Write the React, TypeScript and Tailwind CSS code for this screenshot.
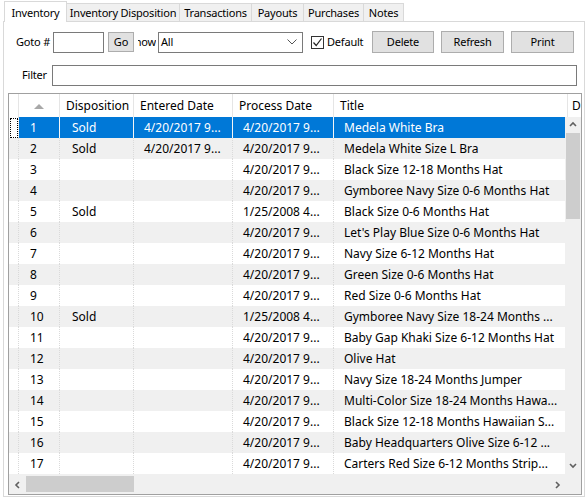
import React from "react";

type Row = {
  n: number;
  disp: string;
  entered: string;
  processed: string;
  title: string;
};

const rows: Row[] = [
  { n: 1, disp: "Sold", entered: "4/20/2017 9...", processed: "4/20/2017 9...", title: "Medela White Bra" },
  { n: 2, disp: "Sold", entered: "4/20/2017 9...", processed: "4/20/2017 9...", title: "Medela White Size L Bra" },
  { n: 3, disp: "", entered: "", processed: "4/20/2017 9...", title: "Black Size 12-18 Months Hat" },
  { n: 4, disp: "", entered: "", processed: "4/20/2017 9...", title: "Gymboree Navy Size 0-6 Months Hat" },
  { n: 5, disp: "Sold", entered: "", processed: "1/25/2008 4...", title: "Black Size 0-6 Months Hat" },
  { n: 6, disp: "", entered: "", processed: "4/20/2017 9...", title: "Let's Play Blue Size 0-6 Months Hat" },
  { n: 7, disp: "", entered: "", processed: "4/20/2017 9...", title: "Navy Size 6-12 Months Hat" },
  { n: 8, disp: "", entered: "", processed: "4/20/2017 9...", title: "Green Size 0-6 Months Hat" },
  { n: 9, disp: "", entered: "", processed: "4/20/2017 9...", title: "Red Size 0-6 Months Hat" },
  { n: 10, disp: "Sold", entered: "", processed: "1/25/2008 4...", title: "Gymboree Navy Size 18-24 Months ..." },
  { n: 11, disp: "", entered: "", processed: "4/20/2017 9...", title: "Baby Gap Khaki Size 6-12 Months Hat" },
  { n: 12, disp: "", entered: "", processed: "4/20/2017 9...", title: "Olive Hat" },
  { n: 13, disp: "", entered: "", processed: "4/20/2017 9...", title: "Navy Size 18-24 Months Jumper" },
  { n: 14, disp: "", entered: "", processed: "4/20/2017 9...", title: "Multi-Color Size 18-24 Months Hawa..." },
  { n: 15, disp: "", entered: "", processed: "4/20/2017 9...", title: "Black Size 12-18 Months Hawaiian S..." },
  { n: 16, disp: "", entered: "", processed: "4/20/2017 9...", title: "Baby Headquarters Olive Size 6-12 ..." },
  { n: 17, disp: "", entered: "", processed: "4/20/2017 9...", title: "Carters Red Size 6-12 Months Strip..." },
];

const tabs = [
  { label: "Inventory Disposition", w: "w-[113px]" },
  { label: "Transactions", w: "w-[72px]" },
  { label: "Payouts", w: "w-[52px]" },
  { label: "Purchases", w: "w-[60px]" },
  { label: "Notes", w: "w-[40px]" },
];

function Chevron({ dir }: { dir: "up" | "down" | "left" | "right" }) {
  const pts = {
    up: "1,5 4,2 7,5",
    down: "1,2 4,5 7,2",
    left: "5,1 2,4 5,7",
    right: "3,1 6,4 3,7",
  }[dir];
  return (
    <svg width="8" height="8" viewBox="0 0 8 8">
      <polyline points={pts} fill="none" stroke="#606060" strokeWidth="1.6" />
    </svg>
  );
}

function Btn({ label, w }: { label: string; w: string }) {
  return (
    <div
      className={`${w} h-[22px] flex items-center justify-center bg-[#e1e1e1] border border-[#adadad] text-black`}
    >
      {label}
    </div>
  );
}

export default function App() {
  return (
    <div
      className="w-[588px] h-[498px] bg-white overflow-hidden text-[12px] text-black whitespace-nowrap"
      style={{ fontFamily: '"Noto Sans", "Open Sans", sans-serif' }}
    >
      {/* tab strip */}
      <div className="flex items-end h-[21px] pl-[4px] relative z-10 text-[11px] tracking-[-0.2px]">
        <div className="w-[63px] h-[21px] -mb-px bg-white border border-b-0 border-[#d9d9d9] flex items-start justify-center pt-[3px]">
          Inventory
        </div>
        {tabs.map((t) => (
          <div
            key={t.label}
            className={`${t.w} h-[18px] shrink-0 bg-[#f0f0f0] border border-l-0 border-b-0 border-[#d9d9d9] flex items-center justify-center pt-px`}
          >
            {t.label}
          </div>
        ))}
      </div>

      {/* tab page */}
      <div className="ml-[3px] w-[582px] h-[476px] border border-[#d9d9d9] bg-white flex flex-col">
        {/* toolbar */}
        <div className="flex items-center h-[22px] mt-[9px] text-[11px] tracking-[-0.2px]">
          <div className="ml-[12px] w-[37px] shrink-0">Goto #</div>
          <div className="w-[51px] h-[21px] shrink-0 border border-[#7a7a7a] bg-white" />
          <div className="ml-[4px] w-[26px] h-[20px] shrink-0 flex items-center justify-center bg-[#e1e1e1] border border-[#adadad]">
            Go
          </div>
          <div className="ml-[4px] w-[18px] shrink-0 overflow-hidden flex justify-end">
            <span className="shrink-0">Show</span>
          </div>
          <div className="ml-[2px] w-[145px] h-[21px] shrink-0 border border-[#7a7a7a] bg-white flex items-center justify-between pl-[2px] pr-[5px]">
            <span>All</span>
            <svg width="10" height="6" viewBox="0 0 10 6">
              <polyline points="0.5,0.5 5,5 9.5,0.5" fill="none" stroke="#555" strokeWidth="1" />
            </svg>
          </div>
          <div className="ml-[8px] w-[13px] h-[13px] shrink-0 border border-[#333] bg-white flex items-center justify-center">
            <svg width="11" height="11" viewBox="0 0 11 11">
              <polyline points="1.5,5.5 4.2,8.5 9.5,1.5" fill="none" stroke="#222" strokeWidth="1.2" />
            </svg>
          </div>
          <span className="ml-[3px] w-[45px] shrink-0">Default</span>
          <div>
            <Btn label="Delete" w="w-[62px]" />
          </div>
          <div className="ml-[7px]">
            <Btn label="Refresh" w="w-[63px]" />
          </div>
          <div className="ml-[7px]">
            <Btn label="Print" w="w-[63px]" />
          </div>
        </div>

        {/* filter */}
        <div className="flex items-center h-[21px] mt-[12px] text-[11px] tracking-[-0.2px]">
          <div className="ml-[18px] w-[30px] shrink-0">Filter</div>
          <div className="w-[525px] h-[21px] shrink-0 border border-[#7a7a7a] bg-white" />
        </div>

        {/* grid */}
        <div className="ml-[4px] mt-[7px] w-[574px] h-[402px] border border-[#a0a0a0] flex flex-col bg-white">
          {/* header */}
          <div className="flex h-[23px] bg-white overflow-hidden">
            <div className="w-[10px] shrink-0 border-r border-[#e5e5e5]" />
            <div className="w-[41px] shrink-0 border-r border-[#e5e5e5] flex items-center justify-center">
              <svg width="10" height="6" viewBox="0 0 10 6">
                <polygon points="0,6 5,1 10,6" fill="#a8a8a8" />
              </svg>
            </div>
            <div className="w-[74px] shrink-0 border-r border-[#e5e5e5] flex items-center pl-[6px]">Disposition</div>
            <div className="w-[99px] shrink-0 border-r border-[#e5e5e5] flex items-center pl-[6px]">Entered Date</div>
            <div className="w-[101px] shrink-0 border-r border-[#e5e5e5] flex items-center pl-[6px]">Process Date</div>
            <div className="w-[234px] shrink-0 border-r border-[#e5e5e5] flex items-center pl-[6px]">Title</div>
            <div className="shrink-0 flex items-center pl-[4px]">D</div>
          </div>

          {/* body */}
          <div className="flex h-[357px]">
            <div className="w-[556px] overflow-hidden">
              {rows.map((r) => {
                const sel = r.n === 1;
                const bg = sel ? "bg-[#0078d7] text-white" : r.n % 2 === 0 ? "bg-[#f0f0f0]" : "bg-white";
                const cell = sel
                  ? "shrink-0 h-full flex items-center border-r border-[#f5f5f5]"
                  : "shrink-0 h-full flex items-center border-r border-dotted border-[#dadada]";
                return (
                  <div key={r.n} className={`flex h-[21px] ${r.n % 2 === 0 ? "bg-[#f0f0f0]" : "bg-white"}`}>
                    <div className="w-[10px] shrink-0 h-full border-r border-dotted border-[#dadada] flex items-center justify-center">
                      {sel && <div className="w-[8px] h-[20px] border border-dotted border-black" />}
                    </div>
                    <div className={`flex ${bg} h-full`}>
                      <div className={`${cell} w-[41px] pl-[11px]`}>{r.n}</div>
                      <div className={`${cell} w-[74px] pl-[12px]`}>{r.disp}</div>
                      <div className={`${cell} w-[99px] pl-[10px]`}>{r.entered}</div>
                      <div className={`${cell} w-[101px] pl-[10px]`}>{r.processed}</div>
                      <div className={`${cell} w-[231px] pl-[10px] border-r-0`}>{r.title}</div>
                    </div>
                  </div>
                );
              })}
            </div>
            {/* vertical scrollbar */}
            <div className="w-[16px] bg-[#f0f0f0] flex flex-col items-center">
              <div className="h-[16px] flex items-center justify-center">
                <Chevron dir="up" />
              </div>
              <div className="w-[14px] h-[86px] bg-[#cdcdcd]" />
              <div className="flex-1" />
              <div className="h-[16px] flex items-center justify-center">
                <Chevron dir="down" />
              </div>
            </div>
          </div>

          {/* horizontal scrollbar */}
          <div className="flex h-[20px] bg-[#f0f0f0] border-t border-[#f0f0f0]">
            <div className="w-[17px] flex items-center justify-center">
              <Chevron dir="left" />
            </div>
            <div className="mt-[1px] w-[108px] h-[16px] bg-[#cdcdcd]" />
            <div className="flex-1" />
            <div className="w-[17px] flex items-center justify-center">
              <Chevron dir="right" />
            </div>
            <div className="w-[16px] bg-[#f0f0f0]" />
          </div>
        </div>
      </div>
    </div>
  );
}
